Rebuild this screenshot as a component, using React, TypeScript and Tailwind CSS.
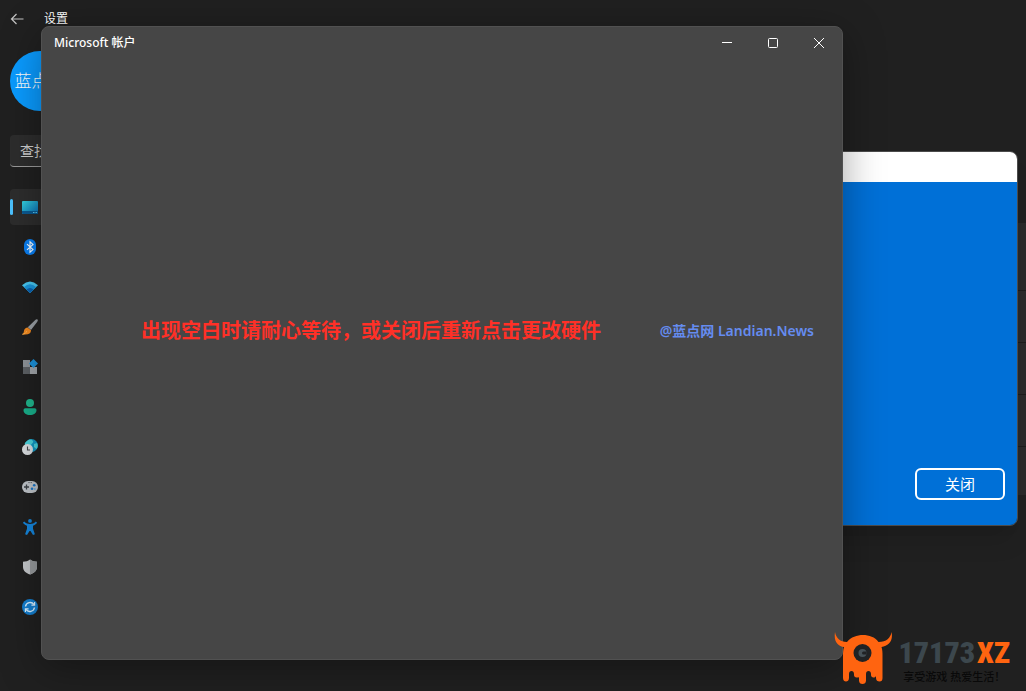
import type { ReactNode } from "react";

interface NavItem {
  label: string;
  icon: ReactNode;
}

const navItems: NavItem[] = [
  {
    label: "系统",
    icon: (
      <>
        <defs>
          <linearGradient id="screen" x1="0" y1="0" x2="1" y2="1">
            <stop offset="0" stopColor="#35d3e0" />
            <stop offset="1" stopColor="#0a6db5" />
          </linearGradient>
        </defs>
        <rect x="0" y="2" width="16" height="13" rx="1" fill="url(#screen)" />
        <path d="M0 12h16v2a1 1 0 0 1-1 1H1a1 1 0 0 1-1-1z" fill="#0b5a92" />
        <path d="M11 13h1.500v1H11zM13.500 13H15v1h-1.500z" fill="#58c7ee" />
      </>
    ),
  },
  {
    label: "蓝牙和其他设备",
    icon: (
      <>
        <rect x="2" y="0" width="12" height="16" rx="6" fill="#0a80f5" />
        <path d="M5 5.200l6 5.400-3 2.600V2.800l3 2.600-6 5.400" fill="none" stroke="#fff" strokeWidth="1.100" />
      </>
    ),
  },
  {
    label: "网络和 Internet",
    icon: (
      <>
        <path d="M0 6.200Q8-1 16 6.200L8 14z" fill="#48c8f2" />
        <path d="M2 8.100Q8 2.400 14 8.100L8 14z" fill="#1a96dc" />
        <path d="M4.500 10.600Q8 7.300 11.500 10.600L8 14z" fill="#0b62b0" />
      </>
    ),
  },
  {
    label: "个性化",
    icon: (
      <>
        <path d="M15.500.5c.7.700.3 1.600-.4 2.600L9 11 5.800 8.200 13 1.300c.8-.8 1.800-1.400 2.500-.8z" fill="#9aa0a6" />
        <path d="M5.600 8.500L9 11.300c.2 3.200-3 5.100-8.700 4 2-1 1.200-2.500 1.900-4.200.6-1.500 1.900-2.500 3.400-2.600z" fill="#f58a1f" />
        <path d="M.3 15.300c2.400-.2 3.700-1.300 4.500-3.300" fill="none" stroke="#ffb04a" />
      </>
    ),
  },
  {
    label: "应用",
    icon: (
      <>
        <rect x="1" y="1" width="7" height="7" fill="#8f9499" />
        <rect x="1" y="8" width="7" height="7" fill="#5d6165" />
        <rect x="8" y="8" width="7" height="7" fill="#a2a6aa" />
        <path d="M11.500 0L16 4.500 11.500 9 7 4.500z" fill="#1c93dc" />
      </>
    ),
  },
  {
    label: "帐户",
    icon: (
      <>
        <circle cx="8" cy="4" r="4" fill="#20b78e" />
        <path d="M1.500 11a1.800 1.800 0 0 1 1.800-1.800h9.400a1.800 1.800 0 0 1 1.800 1.800c0 3.200-2.800 5-6.500 5s-6.500-1.800-6.500-5z" fill="#19b08b" />
      </>
    ),
  },
  {
    label: "时间和语言",
    icon: (
      <>
        <circle cx="9.500" cy="6.500" r="6.500" fill="#1298c4" />
        <path d="M5 2c3-2.400 5-1.500 6 0S9 5 8 7s-4 1-5-1 1-3.200 2-4zM12 5l3-1c1 2 1 4-.5 6L12 8z" fill="#4cd4dd" />
        <circle cx="5.500" cy="10.500" r="5.500" fill="#dcdfe2" />
        <path d="M5.500 7.500v3.500H8" fill="none" stroke="#44484c" strokeWidth="1.100" />
      </>
    ),
  },
  {
    label: "游戏",
    icon: (
      <>
        <rect x="0" y="2" width="16" height="12" rx="6" fill="#c0c5ca" />
        <path d="M4.500 5.500v5M2 8h5" stroke="#3e4348" strokeWidth="1.300" />
        <path d="M6.500 3.600h1M8.700 3.600h1" stroke="#3e4348" />
        <circle cx="12.200" cy="6.200" r="1.300" fill="#1976c8" />
        <circle cx="10" cy="9.800" r="1.300" fill="#1976c8" />
        <circle cx="12.800" cy="10" r="1" fill="#6faee0" />
      </>
    ),
  },
  {
    label: "辅助功能",
    icon: (
      <>
        <circle cx="8" cy="1.900" r="1.900" fill="#1586dd" />
        <path d="M2.200 2.600c1.800 2 3.600 2.400 5.800 2.400s4-.4 5.800-2.400l1.300 1.200c-1 1.500-2.500 2.400-4.100 2.900v3.100l1.900 5.400-1.900.8L8.500 12h-1L5 16l-1.900-.8L5 9.800V6.700C3.400 6.200 1.900 5.300.9 3.800z" fill="#1586dd" />
      </>
    ),
  },
  {
    label: "隐私和安全性",
    icon: (
      <>
        <path d="M8 .5c2 1.600 4.400 2.200 7 2.200V8c0 3.800-3 6.200-7 7.500C4 14.200 1 11.800 1 8V2.700c2.600 0 5-.6 7-2.200z" fill="#c5c8cb" />
        <path d="M8 .5c2 1.600 4.400 2.200 7 2.200V8c0 3.800-3 6.200-7 7.500z" fill="#96999c" />
      </>
    ),
  },
  {
    label: "Windows 更新",
    icon: (
      <>
        <circle cx="8" cy="8" r="8" fill="#147fd0" />
        <path d="M3.500 7.500A4.700 4.700 0 0 1 12 5.600M12.500 8.500A4.700 4.700 0 0 1 4 10.400" fill="none" stroke="#d9f0ff" strokeWidth="1.400" />
        <path d="M12.600 3v3.200H9.400M3.400 13V9.800h3.200" fill="none" stroke="#d9f0ff" strokeWidth="1.200" />
      </>
    ),
  },
];

function Sidebar() {
  return (
    <aside className="w-72 shrink-0 px-2.5 pt-3.5">
      <div className="flex size-15 items-center justify-center rounded-full bg-[#0a9bff] text-[17px] font-light whitespace-nowrap">
        蓝点网
      </div>
      <input
        type="search"
        aria-label="查找设置"
        placeholder="查找设置"
        className="mt-6 h-8 w-full rounded border-b border-[#9a9a9a] bg-[#2d2d2d] px-2.5 text-sm outline-none placeholder:text-[#cfcfcf]"
      />
      <nav className="mt-5.5 flex flex-col gap-1">
        {navItems.map((item, index) => (
          <a
            key={item.label}
            href="#"
            aria-label={item.label}
            aria-current={index === 0 ? "page" : undefined}
            className={
              index === 0
                ? "flex h-9 items-center gap-[9px] rounded bg-[#2d2d2d]"
                : "flex h-9 items-center rounded pl-3"
            }
          >
            {index === 0 && <span className="h-4 w-[3px] rounded-full bg-[#4cc2ff]" />}
            <svg viewBox="0 0 16 16" className="size-4">{item.icon}</svg>
          </a>
        ))}
      </nav>
    </aside>
  );
}

function SettingsPage() {
  return (
    <div className="flex min-h-screen flex-col">
      <header className="flex h-[37px] items-center gap-5 px-2.5">
        <button type="button" aria-label="返回" className="flex h-9 w-3.5 items-center justify-center">
          <svg viewBox="0 0 14 12" className="h-3 w-3.5 shrink-0" fill="none" stroke="#c4c4c4" strokeWidth="1.200">
            <path d="M13.500 6H1.500M6.500 1l-5 5 5 5" />
          </svg>
        </button>
        <h1 className="text-xs">设置</h1>
      </header>
      <div className="flex grow">
        <Sidebar />
        <main className="mt-46.5 h-68 grow divide-y divide-[#1c1c1c] bg-[#2a2a2a]">
          <div className="h-17" />
          <div className="h-13" />
          <div className="h-13" />
          <div className="h-13" />
          <div className="h-12" />
        </main>
      </div>
    </div>
  );
}

function HardwareDialog() {
  return (
    <section className="absolute top-[151px] right-2 flex h-[375px] w-[600px] flex-col overflow-hidden rounded-lg border border-[#4b4b4b] shadow-xl">
      <div className="h-[30px] shrink-0 bg-white" />
      <div className="flex grow items-end justify-end bg-[#0070d7] px-3 pb-[25px]">
        <button type="button" className="h-8 w-[90px] rounded-md border-2 border-white text-[15px]">
          关闭
        </button>
      </div>
    </section>
  );
}

function AccountWindow() {
  return (
    <section className="absolute top-[26px] right-[183px] bottom-[31px] left-[41px] flex flex-col overflow-hidden rounded-lg border border-[#515151] bg-[#464646] shadow-[0_8px_40px_rgba(0,0,0,0.35)]">
      <header className="flex h-8 shrink-0 items-center justify-between pl-3">
        <h2 className="text-xs font-medium">Microsoft 帐户</h2>
        <div className="flex h-8">
          <button type="button" aria-label="最小化" className="flex w-[46px] items-center justify-center">
            <svg viewBox="0 0 12 12" className="size-3" stroke="#fff">
              <path d="M1 5.500h10" />
            </svg>
          </button>
          <button type="button" aria-label="最大化" className="flex w-[46px] items-center justify-center">
            <svg viewBox="0 0 12 12" className="size-3" fill="none" stroke="#fff">
              <rect x="1.500" y="1.500" width="9" height="9" rx="1" />
            </svg>
          </button>
          <button type="button" aria-label="关闭窗口" className="flex w-[46px] items-center justify-center">
            <svg viewBox="0 0 12 12" className="size-3" stroke="#fff">
              <path d="M1 1l10 10M11 1L1 11" />
            </svg>
          </button>
        </div>
      </header>
      <div className="flex grow items-center justify-between pr-7 pb-14 pl-[99px] whitespace-nowrap">
        <p className="text-xl font-bold text-[#ff3027]">出现空白时请耐心等待，或关闭后重新点击更改硬件</p>
        <p className="text-sm font-semibold text-[#658cf0]">@蓝点网 Landian.News</p>
      </div>
    </section>
  );
}

function Watermark() {
  return (
    <div className="absolute right-4 bottom-1.5 flex items-end gap-1">
      <svg viewBox="0 0 60 54" className="h-[54px] w-[60px]">
        <path
          d="M1 1C-.5 11 4 15 10 16c-1 3-1 6-1 9v22c0 2.500 1.500 3.500 3 3.500s3-1 3-3.500v-4c0-2 1-3 2.500-3s2.500 1 2.500 3v1c0 1.500 1 2.500 2.500 2.500S25 45.500 25 47v2.500c0 2.500 1.500 3.500 3.500 3.500s3.500-1 3.500-3.500V43c0-2 1-3 2.500-3s2.500 1 2.500 3v1c0 1.500 1 2.500 2.500 2.500 1 0 2-.5 2.500-1.500v2c0 2.500 1.500 3.500 3.500 3.500s3-1 3-3.500V25c0-3 0-6-1-9 7-1 12-6 10-15-1 6-5 10-13 10C41 6 35 4 29 4s-12 2-16 7C6 11 2 7 1 1z"
          fill="#ff6410"
        />
        <circle cx="28.500" cy="22" r="9" fill="#202224" />
        <circle cx="28.500" cy="22" r="4" fill="#465157" />
        <path d="M32.500 20.500h-3a1.500 1.500 0 0 0 0 3h3z" fill="#202224" />
      </svg>
      <div className="flex flex-col whitespace-nowrap">
        <p className="flex gap-0.5 font-['Roboto_Condensed','Liberation_Sans_Narrow',sans-serif] text-3xl/8 font-black text-[#3c474d]">
          17173<span className="text-[#ff6410]">XZ</span>
        </p>
        <p className="text-center text-[11px] leading-4 font-medium text-[#090909]">享受游戏 热爱生活！</p>
      </div>
    </div>
  );
}

export default function App() {
  return (
    <div className="relative min-h-screen overflow-hidden bg-[#202020] font-['Noto_Sans','Noto_Sans_CJK_SC',sans-serif] text-white">
      <SettingsPage />
      <HardwareDialog />
      <AccountWindow />
      <Watermark />
    </div>
  );
}
